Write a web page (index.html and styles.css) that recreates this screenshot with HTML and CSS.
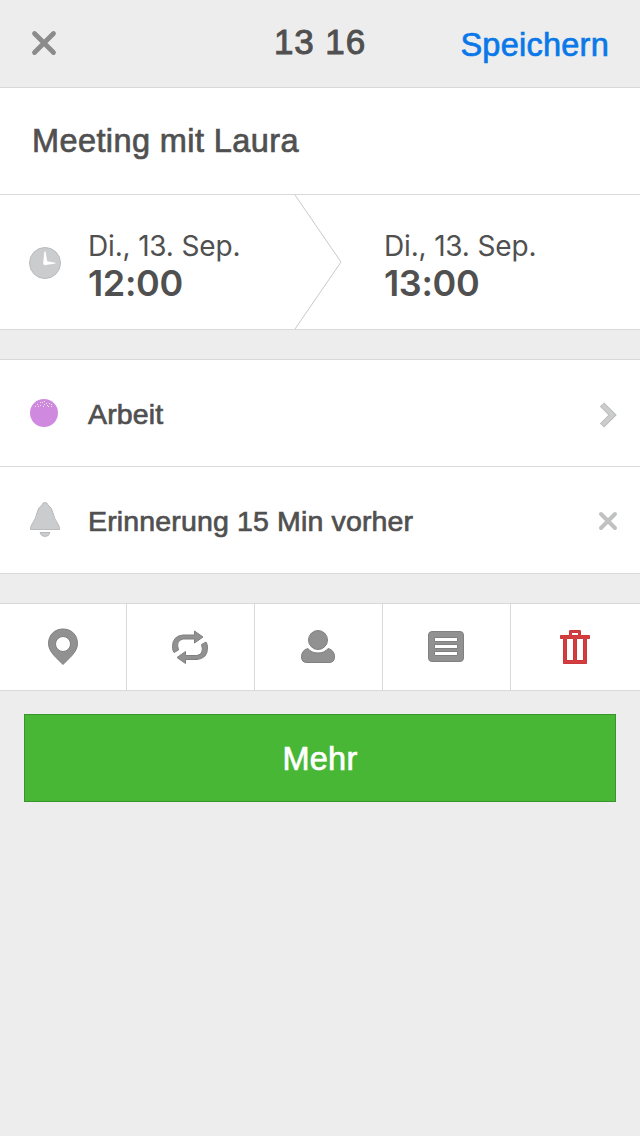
FILE: index.html
```html
<!DOCTYPE html>
<html lang="de">
<head>
<meta charset="utf-8">
<title>13 16</title>
<link rel="stylesheet" href="styles.css">
</head>
<body>
<header class="header">
  <svg class="close" width="26" height="26" viewBox="0 0 26 26"><path d="M3.500 3.500L22.500 22.500M22.500 3.500L3.500 22.500"/></svg>
  <h1 class="title">13 16</h1>
  <a class="save">Speichern</a>
</header>
<section class="subject">Meeting mit Laura</section>
<section class="times">
  <svg class="clock" width="32" height="32" viewBox="0 0 32 32"><circle cx="16" cy="16" r="15.5" fill="#cbcccd" stroke="#b9babb"/><path d="M15 4.500Q16 3.500 17 4.500L18.500 14L26 15.200Q27.500 16 26 17L16 18.500Q13.800 18.500 13.800 16Z" fill="#fff" stroke="#bebfc0" stroke-width=".5"/></svg>
  <div class="slot start"><span class="date">Di., 13. Sep.</span><span class="time">12:00</span></div>
  <svg class="divider" width="48" height="134" viewBox="0 0 48 134"><path d="M1 0L47 67L1 134"/></svg>
  <div class="slot end"><span class="date">Di., 13. Sep.</span><span class="time">13:00</span></div>
</section>
<section class="options">
  <div class="row">
    <svg class="row-icon" width="32" height="38" viewBox="0 0 32 38"><circle cx="15" cy="19" r="14" fill="#cf8ae0"/><path d="M11 8.500h1M15 7.500h1M13 8.500h1M17 9.500h1M20 9.500h1M8 10.500h1M6 12.500h1M11 11.500h1M15 10.500h1M18 11.500h1M22 10.500h1M9 12.500h1M14 12.500h1M19 12.500h1M22 12.500h1" stroke="#f0eadc"/></svg>
    <span class="label">Arbeit</span>
    <svg class="chevron" width="18" height="26" viewBox="0 0 18 26"><path d="M3 2.500L13.500 13L3 23.500" fill="none" stroke="#b9babb" stroke-width="6"/><path d="M3.500 3L13.500 13L3.500 23" fill="none" stroke="#cbcccd" stroke-width="4"/></svg>
  </div>
  <div class="row">
    <svg class="row-icon" width="32" height="38" viewBox="0 0 32 38"><path d="M16 1.500Q18.500 1.500 19 4Q23 6.500 24 12Q25 17.500 29.500 24Q31 27 30.500 28.500H1.500Q1 27 2.500 24Q7 17.500 8 12Q9 6.500 13 4Q13.500 1.500 16 1.500Z" fill="#cbcccd" stroke="#b9babb"/><path d="M11 31.500H21Q20 35.500 16 35.500T11 31.500Z" fill="#cbcccd" stroke="#b9babb"/></svg>
    <span class="label">Erinnerung 15 Min vorher</span>
    <svg class="remove" width="20" height="20" viewBox="0 0 20 20"><path d="M3 3L17 17M17 3L3 17"/></svg>
  </div>
</section>
<nav class="toolbar">
  <div class="tool"><svg width="40" height="40" viewBox="0 0 40 40"><path fill-rule="evenodd" d="M20 2C11.500 2 5.500 8 5.500 16.500C5.500 25.500 15 32 20 37.500C25 32 34.500 25.500 34.500 16.500C34.500 8 28.500 2 20 2ZM20 9.500a7.500 7.500 0 1 1 0 15a7.500 7.500 0 1 1 0-15Z"/></svg></div>
  <div class="tool"><svg width="40" height="40" viewBox="1 0 40 40"><path d="M24.500 4V8H13Q2.500 9 2.500 19.500Q2.500 23.500 4 25.500L8.500 23Q5.500 13.500 13 12H24.500V16L33 10ZM15.500 36.500V32.500H27Q37.500 31.500 37.500 21Q37.500 17 36 15L31.500 17.500Q34.500 27 27 28.500H15.500V24.500L7 30.500Z"/></svg></div>
  <div class="tool"><svg width="40" height="40" viewBox="1 0 40 40"><circle cx="20" cy="13" r="9.500"/><path d="M10 21.500Q13.500 26 20 26T30 21.500Q36.500 23 36.500 30Q36.500 35.500 31 35.500H9Q3.500 35.500 3.500 30Q3.500 23 10 21.500Z"/></svg></div>
  <div class="tool"><svg width="40" height="40" viewBox="1 0 40 40"><path fill-rule="evenodd" d="M6 4.500H34Q37.500 4.500 37.500 8V31Q37.500 34.500 34 34.500H6Q2.500 34.500 2.500 31V8Q2.500 4.500 6 4.500ZM8.500 10.500V14.500H31.500V10.500ZM8.500 17.500V21.500H31.500V17.500ZM8.500 24.500V28.500H31.500V24.500Z"/></svg></div>
  <div class="tool trash"><svg width="40" height="40" viewBox="1 0 40 40"><path fill-rule="evenodd" d="M15 3.500H25Q25.500 3.500 25.500 4V8.500H34.500V11.500H31.500V36.500H8.500V11.500H5.500V8.500H14.500V4Q14.500 3.500 15 3.500ZM16.500 5.500V8.500H23.500V5.500ZM11.500 11.500V33.500H18.500V11.500ZM21.500 11.500V33.500H28.500V11.500Z"/></svg></div>
</nav>
<button class="more">Mehr</button>
</body>
</html>
```

FILE: styles.css
```css
* { box-sizing: border-box; }
body {
  margin: 0;
  min-height: 1136px;
  background: #ededed;
  color: #505050;
  font-family: "Liberation Sans", Arial, sans-serif;
  -webkit-text-stroke: 0.7px currentColor;
}
svg { display: block; flex: none; }
.header {
  height: 88px;
  display: grid;
  grid-template-columns: 180px 1fr 180px;
  align-items: center;
  padding: 0 31px;
  border-bottom: 1px solid #d8d9da;
}
.close { margin-top: -1px; fill: none; stroke: #8b8b8b; stroke-width: 4.8; stroke-linecap: round; }
.title { margin: 0 0 3px; font-size: 35px; line-height: 40px; font-weight: 400; letter-spacing: 0.9px; text-align: center; white-space: nowrap; -webkit-text-stroke-width: 1px; }
.save { justify-self: end; margin-top: 3px; color: #0a78e8; font-size: 32.5px; line-height: 36px; letter-spacing: 0.25px; }
.subject {
  height: 107px;
  padding: 1px 32px 0;
  display: flex;
  align-items: center;
  background: #fff;
  border-bottom: 1px solid #d8d9da;
  font-size: 32.5px;
  letter-spacing: 0.4px;
}
.times {
  height: 135px;
  display: flex;
  background: #fff;
  border-bottom: 1px solid #d8d9da;
  padding-left: 29px;
}
.clock { margin-top: 52px; }
.slot {
  display: flex;
  flex-direction: column;
  gap: 1px;
  padding-top: 34px;
  font-family: Inter, sans-serif;
  -webkit-text-stroke: 0;
}
.start { width: 233px; padding-left: 27px; }
.end { padding-left: 42px; }
.date { font-size: 28px; line-height: 34px; letter-spacing: -0.17px; }
.time { font-size: 36px; line-height: 38px; font-weight: 600; letter-spacing: -0.35px; }
.divider { fill: none; stroke: #c8c9ca; stroke-width: 1; }
.options { margin-top: 29px; border-top: 1px solid #d8d9da; background: #fff; }
.row {
  height: 107px;
  display: flex;
  align-items: center;
  padding: 0 22px 0 29px;
  border-bottom: 1px solid #d8d9da;
}
.row-icon { margin-right: 27px; }
.label { flex: 1; margin-top: 1px; font-size: 28.5px; line-height: 34px; letter-spacing: 0.15px; }
.chevron { margin: 4px 1px 0 0; }
.remove { margin-top: 2px; fill: none; stroke: #c0c1c2; stroke-width: 4; stroke-linecap: round; }
.toolbar {
  height: 88px;
  margin-top: 29px;
  display: grid;
  grid-template-columns: 127px 128px 128px 128px 1fr;
  background: #fff;
  border: solid #d8d9da;
  border-width: 1px 0;
}
.tool {
  display: flex;
  align-items: center;
  justify-content: center;
  border-right: 1px solid #d8d9da;
  fill: #919191;
  stroke: #808080;
  stroke-width: 1;
}
.tool:not(:first-child) svg { margin-left: 1px; }
.trash { border-right: 0; fill: #d53c3d; stroke: #c9393b; }
.more {
  display: block;
  width: 592px;
  height: 88px;
  margin: 23px 24px 0;
  padding: 2px 0 0;
  background: #47b735;
  border: 1px solid #3a942c;
  color: #fff;
  font: 32.5px "Liberation Sans", Arial, sans-serif;
  letter-spacing: 0.3px;
  -webkit-text-stroke: 0.7px #fff;
}
```
